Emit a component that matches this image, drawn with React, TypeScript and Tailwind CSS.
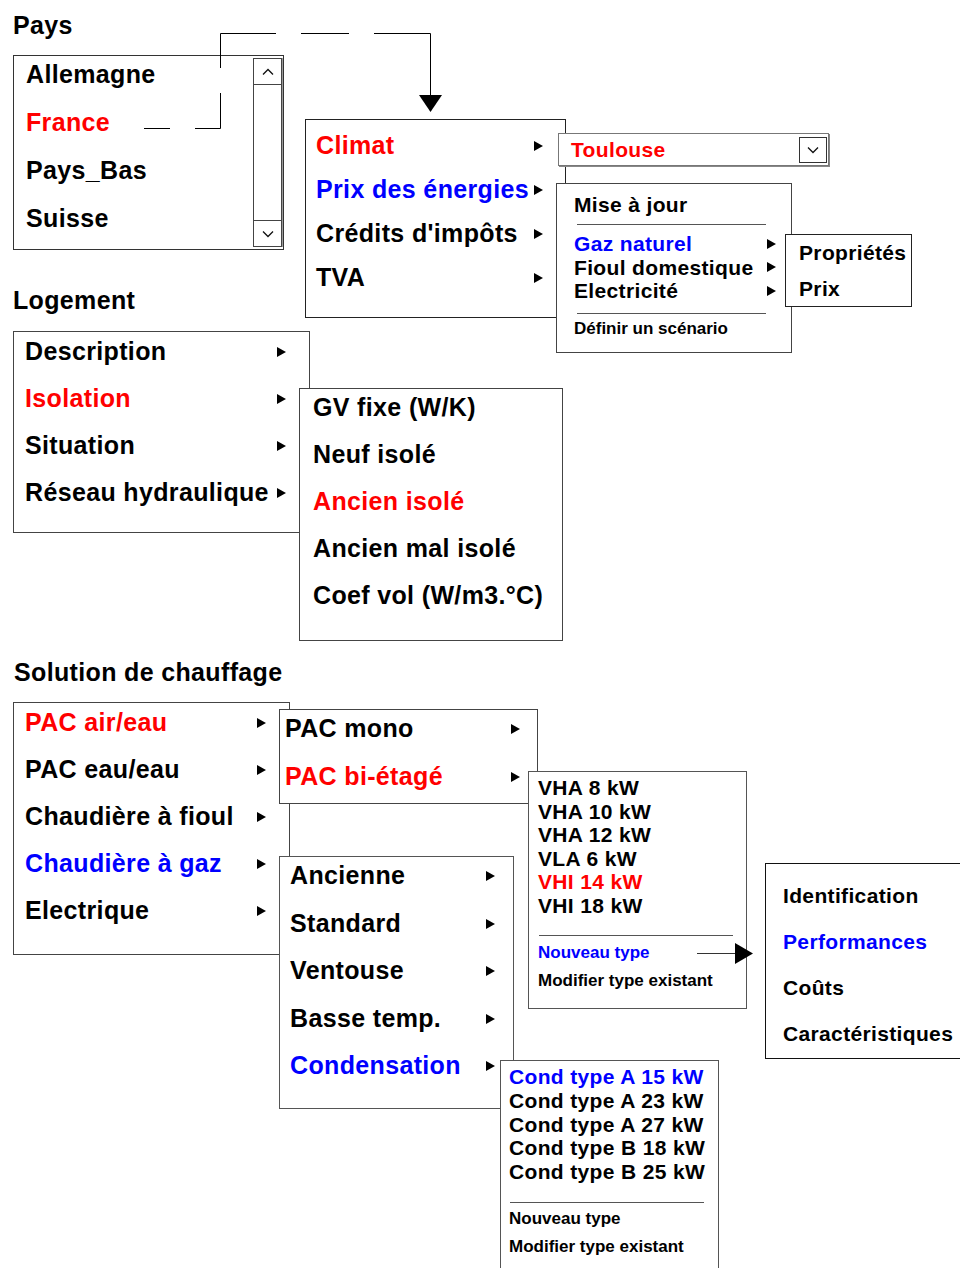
import React from 'react';

const RED = 'text-[#ff0000]';
const BLUE = 'text-[#0000ff]';

function Tri() {
  return (
    <svg width="9" height="10" viewBox="0 0 9 10" className="shrink-0">
      <path d="M0 0L9 5L0 10Z" fill="#000" />
    </svg>
  );
}

function ArrowRow({ label, tone = '', h }: { label: string; tone?: string; h: string }) {
  return (
    <div className={`flex items-center justify-between ${h}`}>
      <span className={`whitespace-nowrap ${tone}`}>{label}</span>
      <Tri />
    </div>
  );
}

function Row({ label, tone = '', h }: { label: string; tone?: string; h: string }) {
  return (
    <div className={`flex items-center whitespace-nowrap ${h} ${tone}`}>{label}</div>
  );
}

function Chevron({ up }: { up?: boolean }) {
  return (
    <svg width="12" height="8" viewBox="0 0 12 8">
      <polyline
        points={up ? '1,6.5 6,1.5 11,6.5' : '1,1.5 6,6.5 11,1.5'}
        fill="none"
        stroke="#111"
        strokeWidth="1.3"
      />
    </svg>
  );
}

export default function App() {
  return (
    <div className="relative w-[960px] h-[1268px] overflow-hidden bg-white text-black tracking-[0.35px] font-['Liberation_Sans',Arial,sans-serif] font-bold">
      {/* section titles */}
      <div className="absolute left-[13px] top-[10px] text-[25px] leading-[30px]">Pays</div>
      <div className="absolute left-[13px] top-[285px] text-[25px] leading-[30px]">Logement</div>
      <div className="absolute left-[14px] top-[657px] text-[25px] leading-[30px]">Solution de chauffage</div>

      {/* Pays listbox */}
      <div className="absolute left-[13px] top-[55px] w-[271px] h-[195px] flex border border-[#333] bg-white">
        <div className="flex-1 flex flex-col gap-[10px] pl-[12px] text-[25px]">
          <Row label="Allemagne" h="h-[38px]" />
          <Row label="France" tone={RED} h="h-[38px]" />
          <Row label="Pays_Bas" h="h-[38px]" />
          <Row label="Suisse" h="h-[38px]" />
        </div>
        <div className="w-[29px] my-[2px] mr-[1px] flex flex-col border border-[#444] shadow-[1px_0_0_#999]">
          <div className="h-[26px] flex items-center justify-center border-b border-[#444]">
            <Chevron up />
          </div>
          <div className="flex-1" />
          <div className="h-[26px] flex items-center justify-center border-t border-[#444]">
            <Chevron />
          </div>
        </div>
      </div>

      {/* dashed connector France -> menu */}
      <svg className="absolute left-0 top-0 pointer-events-none" width="960" height="130">
        <path
          d="M144 128.5H170M195 128.5H220.5V93M220.5 68V33.5H276M301 33.5H349M374 33.5H430.5V96"
          fill="none"
          stroke="#000"
          strokeWidth="1"
        />
        <polygon points="419,95 442,95 430.5,112" fill="#000" />
      </svg>

      {/* Climat menu */}
      <div className="absolute left-[305px] top-[119px] w-[261px] h-[199px] flex flex-col pt-[4px] pl-[10px] pr-[22px] border border-[#222] bg-white text-[25px]">
        <ArrowRow label="Climat" tone={RED} h="h-[44px]" />
        <ArrowRow label="Prix des énergies" tone={BLUE} h="h-[44px]" />
        <ArrowRow label="Crédits d'impôts" h="h-[44px]" />
        <ArrowRow label="TVA" h="h-[44px]" />
      </div>

      {/* Toulouse combo */}
      <div className="absolute left-[558px] top-[133px] w-[271px] h-[33px] flex items-center pl-[12px] pr-[1px] border border-[#777] bg-white shadow-[1px_1px_0_#888] text-[21px]">
        <span className={RED}>Toulouse</span>
        <div className="ml-auto w-[28px] h-[26px] flex items-center justify-center border border-[#333]">
          <Chevron />
        </div>
      </div>

      {/* Mise à jour menu */}
      <div className="absolute left-[556px] top-[183px] w-[236px] h-[170px] flex flex-col pt-[6px] pl-[17px] pr-[15px] border border-[#444] bg-white text-[21px]">
        <Row label="Mise à jour" h="h-[30px]" />
        <div className="mt-[4px] ml-[3px] mr-[10px] h-px bg-[#555]" />
        <div className="mt-[7px] flex flex-col">
          <ArrowRow label="Gaz naturel" tone={BLUE} h="h-[23.5px]" />
          <ArrowRow label="Fioul domestique" h="h-[23.5px]" />
          <ArrowRow label="Electricité" h="h-[23.5px]" />
        </div>
        <div className="mt-[10px] ml-[3px] mr-[10px] h-px bg-[#555]" />
        <Row label="Définir un scénario" h="h-[30px] text-[17px] tracking-normal" />
      </div>

      {/* Propriétés */}
      <div className="absolute left-[785px] top-[234px] w-[127px] h-[73px] flex flex-col pl-[13px] border border-[#222] bg-white text-[21px]">
        <Row label="Propriétés" h="h-[36px]" />
        <Row label="Prix" h="h-[35px]" />
      </div>

      {/* Logement menu */}
      <div className="absolute left-[13px] top-[331px] w-[297px] h-[202px] flex flex-col gap-[7px] pl-[11px] pr-[23px] border border-[#444] bg-white text-[25px]">
        <ArrowRow label="Description" h="h-[40px]" />
        <ArrowRow label="Isolation" tone={RED} h="h-[40px]" />
        <ArrowRow label="Situation" h="h-[40px]" />
        <ArrowRow label="Réseau hydraulique" h="h-[40px]" />
      </div>

      {/* Isolation submenu */}
      <div className="absolute left-[299px] top-[388px] w-[264px] h-[253px] flex flex-col gap-[9px] pl-[13px] border border-[#444] bg-white text-[25px]">
        <Row label="GV fixe (W/K)" h="h-[38px]" />
        <Row label="Neuf isolé" h="h-[38px]" />
        <Row label="Ancien isolé" tone={RED} h="h-[38px]" />
        <Row label="Ancien mal isolé" h="h-[38px]" />
        <Row label="Coef vol (W/m3.°C)" h="h-[38px]" />
      </div>

      {/* Solution de chauffage menu */}
      <div className="absolute left-[13px] top-[702px] w-[277px] h-[253px] flex flex-col gap-[7px] pl-[11px] pr-[23px] border border-[#444] bg-white text-[25px]">
        <ArrowRow label="PAC air/eau" tone={RED} h="h-[40px]" />
        <ArrowRow label="PAC eau/eau" h="h-[40px]" />
        <ArrowRow label="Chaudière à fioul" h="h-[40px]" />
        <ArrowRow label="Chaudière à gaz" tone={BLUE} h="h-[40px]" />
        <ArrowRow label="Electrique" h="h-[40px]" />
      </div>

      {/* PAC submenu */}
      <div className="absolute left-[279px] top-[709px] w-[259px] h-[95px] flex flex-col gap-[10px] pl-[5px] pr-[17px] border border-[#444] bg-white text-[25px]">
        <ArrowRow label="PAC mono" h="h-[38px]" />
        <ArrowRow label="PAC bi-étagé" tone={RED} h="h-[38px]" />
      </div>

      {/* VHA list */}
      <div className="absolute left-[528px] top-[771px] w-[219px] h-[238px] flex flex-col pt-[4px] pl-[9px] border border-[#555] bg-white text-[21px]">
        <Row label="VHA 8 kW" h="h-[23.5px]" />
        <Row label="VHA 10 kW" h="h-[23.5px]" />
        <Row label="VHA 12 kW" h="h-[23.5px]" />
        <Row label="VLA 6 kW" h="h-[23.5px]" />
        <Row label="VHI 14 kW" tone={RED} h="h-[23.5px]" />
        <Row label="VHI 18 kW" h="h-[23.5px]" />
        <div className="mt-[18px] ml-[1px] mr-[13px] h-px bg-[#555]" />
        <Row label="Nouveau type" tone={BLUE} h="mt-[3px] h-[28px] text-[17px] tracking-normal" />
        <Row label="Modifier type existant" h="h-[28px] text-[17px] tracking-normal" />
      </div>

      {/* Chaudière à gaz submenu */}
      <div className="absolute left-[279px] top-[856px] w-[235px] h-[253px] flex flex-col gap-[9.5px] pl-[10px] pr-[18px] border border-[#555] bg-white text-[25px]">
        <ArrowRow label="Ancienne" h="h-[38px]" />
        <ArrowRow label="Standard" h="h-[38px]" />
        <ArrowRow label="Ventouse" h="h-[38px]" />
        <ArrowRow label="Basse temp." h="h-[38px]" />
        <ArrowRow label="Condensation" tone={BLUE} h="h-[38px]" />
      </div>

      {/* Condensation list */}
      <div className="absolute left-[500px] top-[1060px] w-[219px] h-[230px] flex flex-col pt-[4px] pl-[8px] border border-[#555] bg-white text-[21px]">
        <Row label="Cond type A 15 kW" tone={BLUE} h="h-[23.75px]" />
        <Row label="Cond type A 23 kW" h="h-[23.75px]" />
        <Row label="Cond type A 27 kW" h="h-[23.75px]" />
        <Row label="Cond type B 18 kW" h="h-[23.75px]" />
        <Row label="Cond type B 25 kW" h="h-[23.75px]" />
        <div className="mt-[18px] ml-[1px] mr-[14px] h-px bg-[#555]" />
        <Row label="Nouveau type" h="mt-[2px] h-[28px] text-[17px] tracking-normal" />
        <Row label="Modifier type existant" h="h-[28px] text-[17px] tracking-normal" />
      </div>

      {/* Nouveau type window */}
      <div className="absolute left-[765px] top-[863px] w-[220px] h-[196px] flex flex-col pt-[9px] pl-[17px] border border-[#111] bg-white text-[21px]">
        <Row label="Identification" h="h-[46px]" />
        <Row label="Performances" tone={BLUE} h="h-[46px]" />
        <Row label="Coûts" h="h-[46px]" />
        <Row label="Caractéristiques" h="h-[46px]" />
      </div>

      {/* arrow Nouveau type -> window */}
      <svg className="absolute left-[690px] top-[940px] pointer-events-none" width="70" height="26">
        <path d="M7 13.5H47" stroke="#333" strokeWidth="1" />
        <polygon points="45,3 63,13.5 45,24" fill="#000" />
      </svg>
    </div>
  );
}
